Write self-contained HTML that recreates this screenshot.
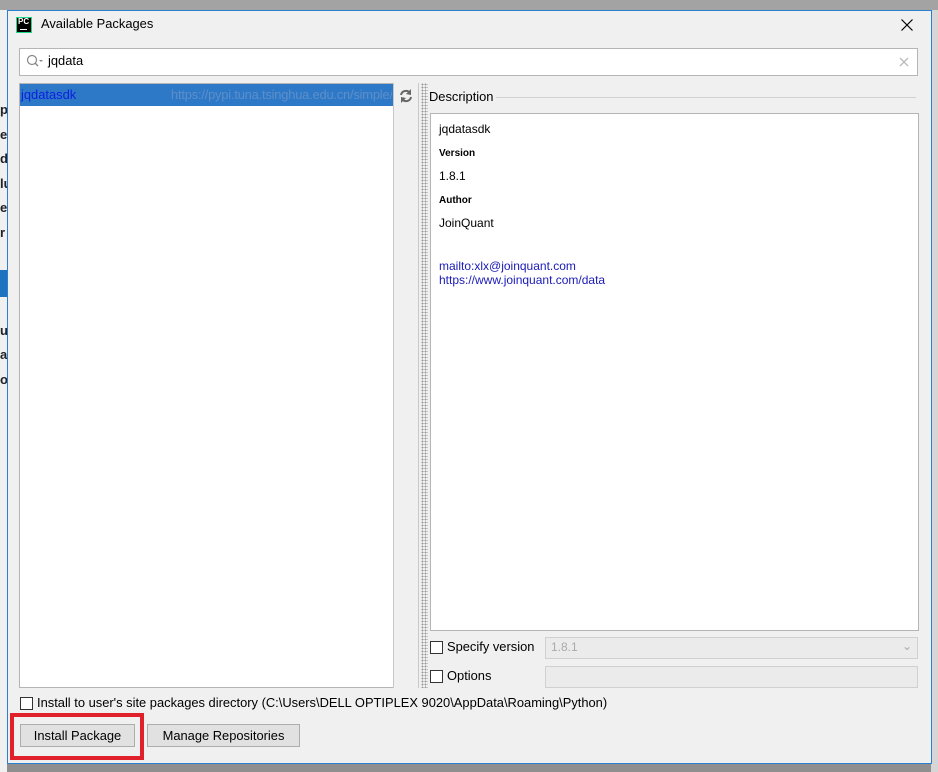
<!DOCTYPE html>
<html><head><style>
*{margin:0;padding:0;box-sizing:border-box}
body{width:938px;height:772px;overflow:hidden;background:#8f8f8f;font-family:"Segoe UI","Liberation Sans","Noto Sans CJK SC",sans-serif;font-size:12.9px;color:#000;position:relative}
.a{position:absolute}
.cb{position:absolute;width:13px;height:13px;border:1px solid #333;background:#fff}
.btn{position:absolute;height:23px;border:1px solid #adadad;background:#e1e1e1;font-size:12.9px;text-align:center;line-height:21px}
</style></head><body>
<div class="a" style="left:0;top:0;width:938px;height:10px;background:#a3a3a3"></div>
<div class="a" style="left:0;top:10px;width:7px;height:762px;background:#f0f0f0"></div>
<div class="a" style="left:0;top:270px;width:7px;height:27px;background:#1e73be"></div>
<div class="a" style="left:0;top:98px;font-weight:bold;font-size:13px;line-height:24.5px;width:7px;overflow:hidden;color:#222">p<br>e<br>d<br>lu<br>e<br>r<br><br><br><br>u<br>a<br>o</div>
<div class="a" style="left:931px;top:10px;width:7px;height:762px;background:#d6d6d6"></div>
<div class="a" style="left:7px;top:10px;width:925px;height:754px;background:#f0f0f0;border:1px solid #2b7fd0"></div>
<div class="a" style="left:16px;top:17px;width:16px;height:16px;background:#000;border:1px solid #21d789"></div>
<div class="a" style="left:18px;top:17px;color:#fff;font-size:8px;font-weight:bold;font-family:'Liberation Sans'">PC</div>
<div class="a" style="left:20px;top:29px;width:7px;height:1px;background:#fff"></div>
<div class="a" style="left:41px;top:16px">Available Packages</div>
<svg class="a" style="left:901px;top:19px" width="12" height="12"><path d="M0.5 0.5L11.5 11.5M11.5 0.5L0.5 11.5" stroke="#000" stroke-width="1.2"/></svg>
<div class="a" style="left:19px;top:48px;width:899px;height:28px;background:#fff;border:1px solid #b5b5b5"></div>
<svg class="a" style="left:26px;top:54px" width="18" height="14"><circle cx="6" cy="6" r="4.5" fill="none" stroke="#888" stroke-width="1.2"/><line x1="9" y1="9" x2="12" y2="12" stroke="#888" stroke-width="1.4"/><path d="M13 6 L17 6 L15 8Z" fill="#888"/></svg>
<div class="a" style="left:48px;top:53px">jqdata</div>
<svg class="a" style="left:899px;top:57px" width="10" height="10"><path d="M1 1L9 9M9 1L1 9" stroke="#bbb" stroke-width="1.3"/></svg>
<div class="a" style="left:19px;top:83px;width:375px;height:605px;background:#fff;border:1px solid #b5b5b5"></div>
<div class="a" style="left:20px;top:84px;width:373px;height:22px;background:#2e78c8"></div>
<div class="a" style="left:21px;top:87px;color:#0a1fe0">jqdatasdk</div>
<div class="a" style="left:171px;top:87px;color:#5d8fc8;width:221px;overflow:hidden;white-space:nowrap;letter-spacing:-0.2px">https://pypi.tuna.tsinghua.edu.cn/simple/</div>
<div class="a" style="left:393px;top:83px;width:26px;height:605px;background:#f0f0f0;border-left:1px solid #c8c8c8;border-right:1px solid #c8c8c8"></div>
<svg class="a" style="left:398px;top:88px" width="16" height="16"><path d="M3 7 A5 5 0 0 1 12 5" fill="none" stroke="#666" stroke-width="2"/><path d="M13 1 L13 7 L8 6Z" fill="#666"/><path d="M13 9 A5 5 0 0 1 4 11" fill="none" stroke="#666" stroke-width="2"/><path d="M3 15 L3 9 L8 10Z" fill="#666"/></svg>
<div class="a" style="left:421px;top:83px;width:7px;height:605px;background-image:radial-gradient(#999 0.8px,transparent 1px);background-size:3px 3px"></div>
<div class="a" style="left:429px;top:89px">Description</div>
<div class="a" style="left:496px;top:97px;width:420px;height:1px;background:#d0d0d0"></div>
<div class="a" style="left:430px;top:113px;width:489px;height:518px;background:#fff;border:1px solid #b5b5b5"></div>
<div class="a" style="left:439px;top:122px;font-family:'Liberation Sans';font-size:12px">jqdatasdk</div>
<div class="a" style="left:439px;top:148px;font-family:'Liberation Sans';font-size:10px;font-weight:bold">Version</div>
<div class="a" style="left:439px;top:169px;font-family:'Liberation Sans';font-size:12px">1.8.1</div>
<div class="a" style="left:439px;top:195px;font-family:'Liberation Sans';font-size:10px;font-weight:bold">Author</div>
<div class="a" style="left:439px;top:216px;font-family:'Liberation Sans';font-size:12px">JoinQuant</div>
<div class="a" style="left:439px;top:259px;font-family:'Liberation Sans';font-size:12px;color:#1a1ab8;line-height:14px">mailto:xlx@joinquant.com<br>https://www.joinquant.com/data</div>
<div class="cb" style="left:430px;top:641px"></div>
<div class="a" style="left:447px;top:639px">Specify version</div>
<div class="a" style="left:545px;top:637px;width:373px;height:22px;background:#ebebeb;border:1px solid #d0d0d0;color:#aaa;padding:2px 5px;font-size:12px">1.8.1<span style="position:absolute;right:5px;top:1px">⌄</span></div>
<div class="cb" style="left:430px;top:670px"></div>
<div class="a" style="left:447px;top:668px">Options</div>
<div class="a" style="left:545px;top:666px;width:373px;height:22px;background:#ebebeb;border:1px solid #d0d0d0"></div>
<div class="cb" style="left:20px;top:697px"></div>
<div class="a" style="left:37px;top:695px">Install to user's site packages directory (C:\Users\DELL OPTIPLEX 9020\AppData\Roaming\Python)</div>
<div class="a" style="left:10px;top:713px;width:134px;height:47px;border:4px solid #e0202a"></div>
<div class="btn" style="left:20px;top:724px;width:115px">Install Package</div>
<div class="btn" style="left:147px;top:724px;width:153px">Manage Repositories</div>
</body></html>
